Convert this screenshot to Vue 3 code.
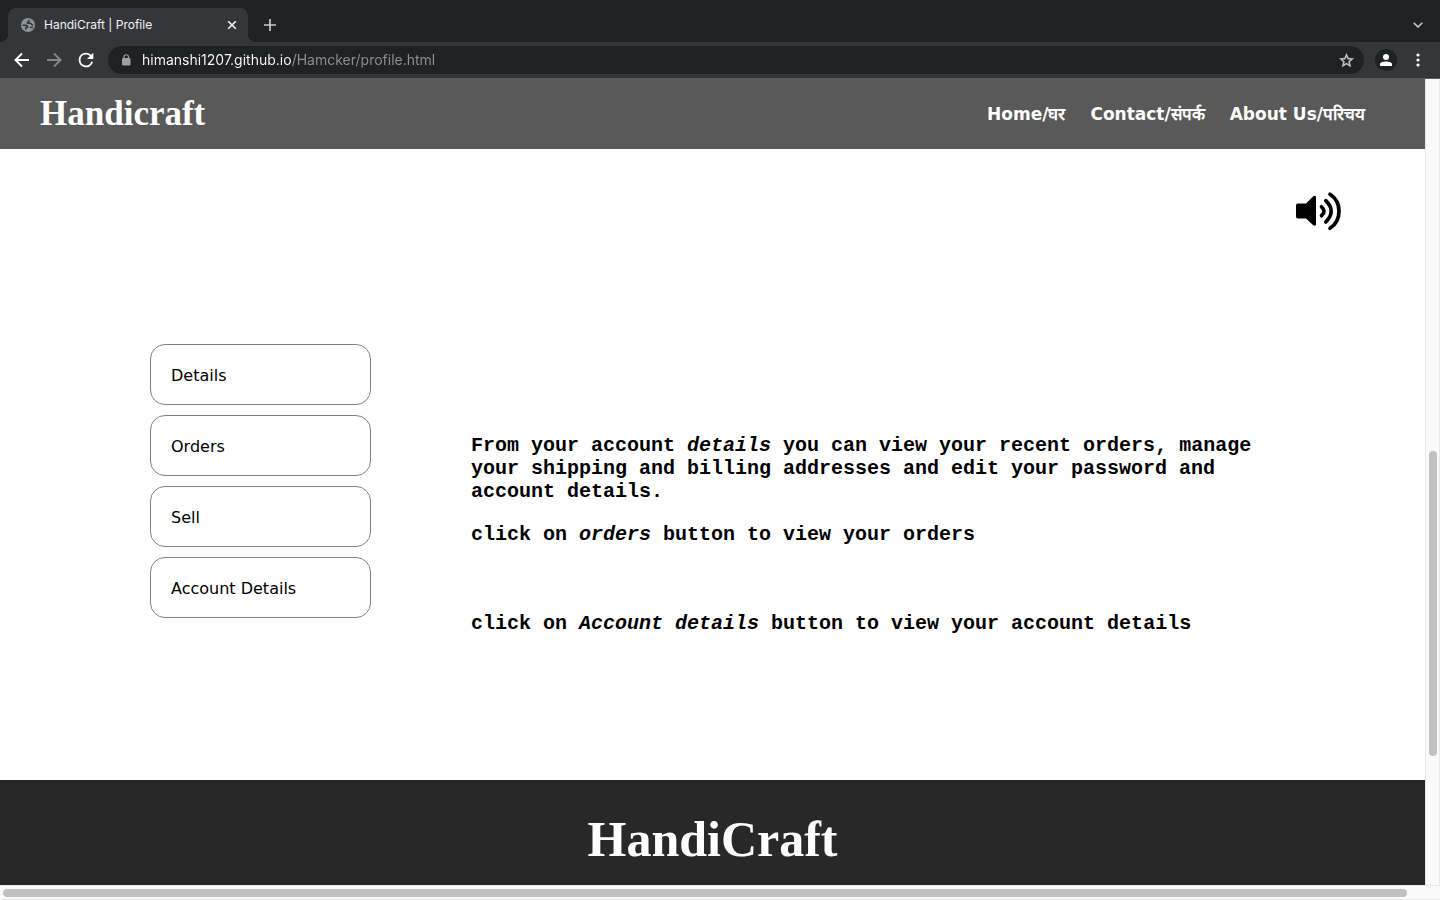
<script setup>
import { ref } from 'vue'

const address = ref('himanshi1207.github.io/Hamcker/profile.html')
const navLinks = ['Home/घर', 'Contact/संपर्क', 'About Us/परिचय']
const options = ['Details', 'Orders', 'Sell', 'Account Details']
</script>

<template>
  <div class="window">
    <div class="tabstrip">
      <div class="tab">
        <svg class="globe" viewBox="0 0 14 14" width="14" height="14" aria-hidden="true">
          <circle cx="7" cy="7" r="7" fill="#8d949b" />
          <path d="M1.500 7.300 H4.600 C6.400 7.300 6.600 8.600 6.600 9.300 H4.800 V11.800 M8 1.800 V3 C8 4 7.300 4.200 6.400 4.200 V5.200 H9.500 C10.200 5.200 10.300 7.300 12.300 7.300 M9.200 9.600 H12" fill="none" stroke="#35363a" stroke-width="1.500" stroke-linejoin="round" />
        </svg>
        <span class="tab-title">HandiCraft | Profile</span>
        <button class="icon-btn tab-close" aria-label="Close tab">
          <svg viewBox="0 0 10 10" width="10" height="10"><path d="M1.200 1.200 L8.800 8.800 M8.800 1.200 L1.200 8.800" stroke="#f1f3f4" stroke-width="1.600" /></svg>
        </button>
      </div>
      <button class="icon-btn new-tab" aria-label="New tab">
        <svg viewBox="0 0 12 12" width="12" height="12"><path d="M6 0 V12 M0 6 H12" stroke="#c8cace" stroke-width="1.700" /></svg>
      </button>
      <button class="icon-btn tab-search" aria-label="Search tabs">
        <svg viewBox="0 0 10 6" width="10" height="6"><path d="M0.700 0.700 L5 5 L9.300 0.700" fill="none" stroke="#c8cace" stroke-width="1.600" /></svg>
      </button>
    </div>

    <div class="toolbar">
      <button class="icon-btn" aria-label="Back">
        <svg viewBox="0 0 16 16" width="16" height="16"><path d="M15 8 H2 M8 1.500 L1.500 8 L8 14.500" fill="none" stroke="#fff" stroke-width="1.900" /></svg>
      </button>
      <button class="icon-btn" aria-label="Forward">
        <svg viewBox="0 0 16 16" width="16" height="16"><path d="M1 8 H14 M8 1.500 L14.500 8 L8 14.500" fill="none" stroke="#85868a" stroke-width="1.900" /></svg>
      </button>
      <button class="icon-btn" aria-label="Reload">
        <svg viewBox="0 0 24 24" width="22" height="22"><path fill="#fff" d="M17.650 6.350A7.960 7.960 0 0 0 12 4a8 8 0 1 0 7.730 10h-2.080A6 6 0 1 1 12 6c1.660 0 3.140.690 4.220 1.780L13 11h7V4z" /></svg>
      </button>
      <div class="omnibox">
        <svg viewBox="0 0 10 12" width="10" height="12" aria-hidden="true">
          <rect x="1" y="4" width="8.500" height="7.500" rx="1" fill="#9aa0a6" />
          <path d="M3 4.500 V3 A2.250 2.250 0 0 1 7.500 3 V4.500" fill="none" stroke="#9aa0a6" stroke-width="1.200" />
        </svg>
        <input v-model="address" class="address" type="text" aria-label="Address" spellcheck="false" />
        <button class="icon-btn star" aria-label="Bookmark this page">
          <svg viewBox="0 0 24 24" width="17" height="17"><path fill="#c8cace" stroke="#c8cace" stroke-width="0.500" d="M22 9.240l-7.190-.620L12 2 9.190 8.630 2 9.240l5.460 4.730L5.820 21 12 17.270 18.180 21l-1.630-7.030L22 9.240zM12 15.400l-3.760 2.270 1-4.280-3.320-2.880 4.380-.380L12 6.100l1.710 4.040 4.380.380-3.320 2.880 1 4.280L12 15.400z" /></svg>
        </button>
      </div>
      <button class="icon-btn avatar" aria-label="Account">
        <svg viewBox="0 0 12 12" width="12" height="12"><circle cx="6" cy="3" r="3" fill="#fff" /><path d="M0 12 V10 C0 8.200 3.500 7.400 6 7.400 S12 8.200 12 10 V12 Z" fill="#fff" /></svg>
      </button>
      <button class="icon-btn menu" aria-label="Menu">
        <svg viewBox="0 0 4 14" width="4" height="14" fill="#fff"><circle cx="2" cy="2" r="1.600" /><circle cx="2" cy="7" r="1.600" /><circle cx="2" cy="12" r="1.600" /></svg>
      </button>
    </div>

    <div class="viewport">
      <div class="page">
        <header class="site-header">
          <h1 class="logo">Handicraft</h1>
          <nav class="nav">
            <a v-for="link in navLinks" :key="link" href="#">{{ link }}</a>
          </nav>
        </header>
        <main class="main">
          <button class="icon-btn speaker" aria-label="Read aloud">
            <svg viewBox="0 0 46 40" width="46" height="40">
              <path d="M2 12.500 H10 L17 5.500 Q20 3.500 20 6.500 V33 Q20 36 17 34 L10 27.500 H2 Q0 27.500 0 25.500 V14.500 Q0 12.500 2 12.500 Z" fill="#000" />
              <g fill="none" stroke="#000" stroke-width="3.700" stroke-linecap="round">
                <path d="M25.500 15.800 Q30.500 20 25.500 24.700" />
                <path d="M29.800 9.700 Q40.500 20 29.800 31" />
                <path d="M34 3.300 C46 11 46 29.500 34 37.200" />
              </g>
            </svg>
          </button>
          <div class="account">
            <div class="options">
              <button v-for="option in options" :key="option" class="option">{{ option }}</button>
            </div>
            <div class="description">
              <p>From your account <em>details</em> you can view your recent orders, manage your shipping and billing addresses and edit your password and account details.</p>
              <p>click on <em>orders</em> button to view your orders</p>
              <p class="spaced">click on <em>Account details</em> button to view your account details</p>
            </div>
          </div>
        </main>
        <footer class="footer">
          <h2>HandiCraft</h2>
        </footer>
      </div>
      <div class="v-track"><div class="v-thumb"></div></div>
    </div>
    <div class="h-track"><div class="h-thumb"></div></div>
  </div>
</template>

<style>
body {
  margin: 0;
}
</style>

<style scoped>
* {
  box-sizing: border-box;
}
.window {
  display: flex;
  flex-direction: column;
  min-height: 100vh;
  background: #fff;
  font-family: Roboto, "Liberation Sans", sans-serif;
}
.icon-btn {
  display: flex;
  align-items: center;
  justify-content: center;
  flex: none;
  width: 32px;
  height: 28px;
  padding: 0;
  border: 0;
  background: none;
}
.tabstrip {
  display: flex;
  height: 42px;
  padding: 8px 6px 0 8px;
  background: #202124;
}
.tab {
  position: relative;
  display: flex;
  align-items: center;
  width: 240px;
  padding: 0 8px 0 13px;
  border-radius: 8px 8px 0 0;
  background: #35363a;
}
.tab::before,
.tab::after {
  content: "";
  position: absolute;
  bottom: 0;
  width: 8px;
  height: 8px;
}
.tab::before {
  left: -8px;
  background: radial-gradient(circle at 0 0, #202124 8px, #35363a 8px);
}
.tab::after {
  right: -8px;
  background: radial-gradient(circle at 100% 0, #202124 8px, #35363a 8px);
}
.tab-title {
  flex: 1;
  margin-left: 9px;
  color: #f1f3f4;
  font-family: Inter, sans-serif;
  font-size: 12px;
  line-height: 16px;
}
.tab-close {
  width: 16px;
}
.new-tab {
  width: 44px;
  height: 34px;
}
.tab-search {
  height: 34px;
  width: 32px;
  margin-left: auto;
}
.toolbar {
  display: flex;
  align-items: center;
  height: 37px;
  padding: 0 6px;
  border-bottom: 1px solid #5b5c5f;
  background: #35363a;
}
.omnibox {
  display: flex;
  align-items: center;
  flex: 1;
  height: 28px;
  margin: 0 6px;
  padding: 0 2px 0 13px;
  border-radius: 14px;
  background: #202124;
}
.address {
  flex: 1;
  min-width: 0;
  margin-left: 11px;
  padding: 0;
  border: 0;
  outline: 0;
  background: linear-gradient(90deg, #fff 150px, #909194 150px);
  background-clip: text;
  -webkit-background-clip: text;
  color: transparent;
  font-family: Inter, sans-serif;
  font-size: 14px;
  line-height: 20px;
}
.avatar {
  width: 22px;
  height: 22px;
  margin: 0 5px;
  border-radius: 50%;
  background: #202124;
}
.viewport {
  display: flex;
  flex: 1;
}
.page {
  display: flex;
  flex: 1;
  flex-direction: column;
  min-width: 0;
}
.site-header {
  display: flex;
  align-items: center;
  justify-content: space-between;
  height: 70px;
  padding: 0 60px 0 40px;
  background: #595959;
  color: #fff;
}
.logo {
  margin: 0;
  font-family: "Liberation Serif", serif;
  font-size: 35px;
  line-height: 40px;
}
.nav {
  display: flex;
  gap: 25px;
}
.nav a {
  color: #fff;
  font-family: "DejaVu Sans", sans-serif;
  font-size: 17px;
  font-weight: bold;
  line-height: 20px;
  text-decoration: none;
}
.main {
  flex: 1;
  padding: 42px 83px 0 150px;
}
.speaker {
  width: 46px;
  height: 40px;
  margin-left: auto;
}
.account {
  display: flex;
  gap: 100px;
  margin-top: 113px;
}
.options {
  display: flex;
  flex-direction: column;
  flex: none;
  gap: 10px;
  width: 221px;
}
.option {
  height: 61px;
  padding: 2px 20px 0;
  border: 1px solid #808080;
  border-radius: 15px;
  background: #fff;
  color: #000;
  font-family: "DejaVu Sans", sans-serif;
  font-size: 16px;
  text-align: left;
}
.description {
  max-width: 800px;
  padding-top: 90px;
  font-family: "Liberation Mono", monospace;
  font-size: 20px;
  font-weight: bold;
  line-height: 23px;
}
.description p {
  margin: 0 0 20px;
}
.description .spaced {
  margin-top: 66px;
}
.footer {
  height: 105px;
  padding-top: 30px;
  background: #282828;
  color: #fff;
  text-align: center;
}
.footer h2 {
  margin: 0;
  font-family: "Liberation Serif", serif;
  font-size: 50px;
  line-height: 58px;
}
.v-track {
  width: 15px;
  padding: 372px 2px 0 3px;
  border: solid #e8e8e8;
  border-width: 0 1px;
  background: #fafafa;
}
.v-thumb {
  width: 8px;
  height: 305px;
  border-radius: 4px;
  background: #c1c1c1;
}
.h-track {
  height: 15px;
  padding: 3px 33px 0 3px;
  border: solid #e8e8e8;
  border-width: 1px 0;
  background: #fafafa;
}
.h-thumb {
  height: 8px;
  border-radius: 4px;
  background: #c1c1c1;
}
</style>
